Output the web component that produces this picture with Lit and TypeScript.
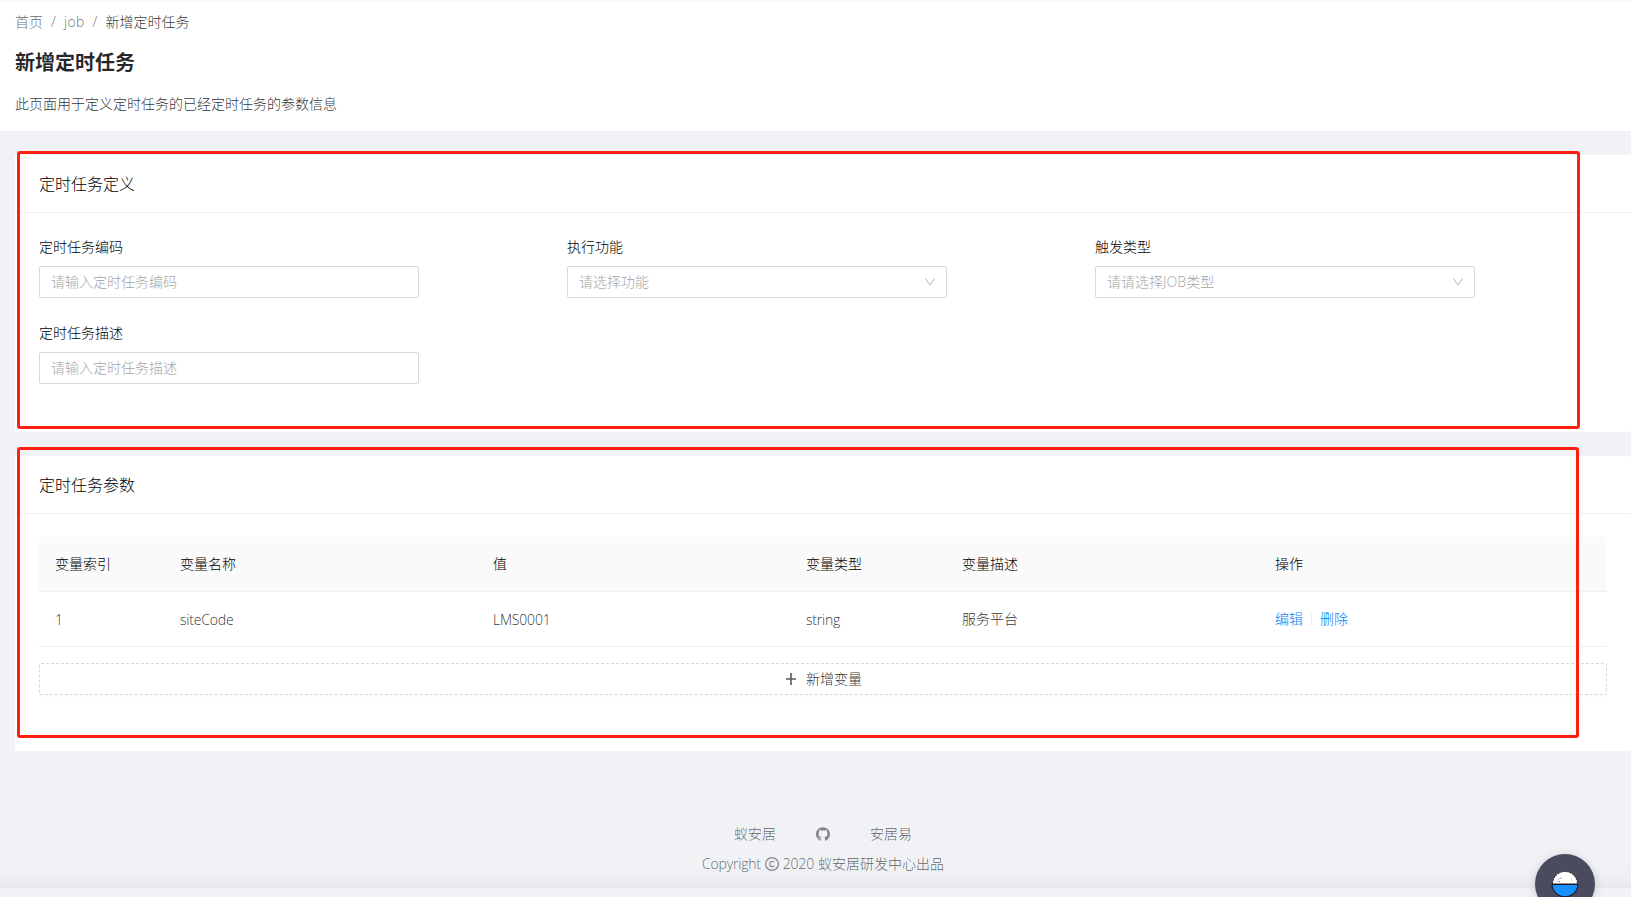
import { LitElement, html, css, svg } from "lit";
import { customElement, property } from "lit/decorators.js";

const chevron = svg`<path d="M884 256h-75c-5.1 0-9.900 2.500-12.900 6.600L512 654.200 227.900 262.600c-3-4.100-7.800-6.600-12.900-6.600h-75c-6.500 0-10.300 7.400-6.500 12.700l352.600 486.100c12.800 17.600 39 17.600 51.700 0l352.600-486.100c3.900-5.300.1-12.700-6.400-12.700z"/>`;
const github = svg`<path d="M511.600 76.300C264.300 76.200 64 276.400 64 523.500 64 718.900 189.300 885 363.800 946c23.500 5.900 19.900-10.800 19.900-22.200v-77.500c-135.700 15.900-141.200-73.900-150.300-88.900C215 726 171.500 718 184.500 703c30.900-15.900 62.400 4 98.900 57.900 26.400 39.100 77.900 32.500 104 26 5.700-23.500 17.900-44.500 34.700-60.800-140.600-25.200-199.200-111-199.200-213 0-49.500 16.300-95 48.300-131.700-20.400-60.500 1.900-112.300 4.900-120 58.100-5.200 118.500 41.600 123.200 45.300 33-8.900 70.700-13.600 112.900-13.600 42.400 0 80.200 4.900 113.500 13.900 11.300-8.600 67.300-48.800 121.300-43.900 2.900 7.700 24.700 58.300 5.500 118 32.400 36.800 48.900 82.700 48.900 132.300 0 102.200-59 188.100-200 212.900a127.500 127.500 0 0138.100 91v112.500c.8 9 0 17.900 15 17.900 177.100-59.700 304.600-227 304.600-424.100 0-247.200-200.400-447.300-447.500-447.300z"/>`;

@customElement("form-field")
export class FormField extends LitElement {
  @property() label = "";
  @property() hint = "";
  @property({ type: Boolean }) select = false;

  static styles = css`
    :host { display: block; width: 380px; height: 86px; box-sizing: border-box; }
    .label { color: #000; line-height: 22px; padding-bottom: 8px; }
    .box {
      display: flex; align-items: center; justify-content: space-between;
      height: 32px; box-sizing: border-box; padding: 0 10px 0 11px;
      border: 1px solid #d9d9d9; border-radius: 2px; background: #fff; color: #a6a6a6;
    }
    .box svg { width: 12px; height: 12px; fill: #bfbfbf; }
    .latin { letter-spacing: 0.1px; }
  `;

  render() {
    const parts = this.hint.split(/([A-Za-z]+)/);
    return html`
      <div class="label">${this.label}</div>
      <div class="box">
        <span>${parts.map((p, i) => (i % 2 ? html`<span class="latin">${p}</span>` : p))}</span>
        ${this.select ? html`<svg viewBox="64 64 896 896">${chevron}</svg>` : ""}
      </div>
    `;
  }
}

@customElement("app-root")
export class AppRoot extends LitElement {
  static styles = css`
    :host {
      display: block; position: relative; height: 897px; overflow: hidden; background: #f0f2f5;
      font: 300 14px/22px "Open Sans", "Noto Sans CJK SC", sans-serif;
      color: rgba(0, 0, 0, 0.84);
    }
    .latin { letter-spacing: -0.2px; }
    .row .latin { padding-top: 1px; }
    .head {
      height: 131px; box-sizing: border-box; padding: 11px 15px 0;
      background: linear-gradient(#f5f5f5, #fff 3px);
    }
    .crumbs { display: flex; gap: 8px; color: rgba(0, 0, 0, 0.6); }
    .crumbs .here { color: rgba(0, 0, 0, 0.84); }
    .crumbs .latin { letter-spacing: 0.25px; }
    h1 { margin: 14px 0 0; font-size: 20px; line-height: 32px; font-weight: 700; color: rgba(0, 0, 0, 0.85); }
    .desc { margin: 14px 0 0; }
    .main { display: flex; flex-direction: column; gap: 24px; padding: 24px 0 0 15px; }
    .card { background: #fff; border-radius: 2px; }
    .card h2 {
      margin: 0; height: 58px; box-sizing: border-box; padding: 0 24px;
      border-bottom: 1px solid #f0f0f0; font-size: 16px; line-height: 58px; font-weight: 300;
      color: #000;
    }
    .form { display: grid; grid-template-columns: repeat(3, 528px); padding: 23px 24px 24px; height: 172px; }
    .params { padding: 23px 24px 56px; }
    .row {
      display: grid; grid-template-columns: 125px 313px 313px 156px 313px 1fr;
      height: 55px; box-sizing: border-box; border-bottom: 1px solid #f0f0f0; align-items: center;
    }
    .row > div { padding-left: 16px; }
    .row.top { background: #fafafa; color: #000; border-radius: 2px 2px 0 0; }
    .ops { display: flex; align-items: center; color: #007dfa; }
    .bar { width: 1px; height: 13px; margin: 0 8px; background: #f0f0f0; }
    .add {
      display: flex; align-items: center; justify-content: center; gap: 8px;
      height: 32px; box-sizing: border-box; margin-top: 16px;
      border: 1px dashed #d9d9d9; border-radius: 2px; box-shadow: 0 2px 0 rgba(0, 0, 0, 0.015);
    }
    .add svg { width: 14px; height: 14px; }
    .foot { padding: 72px 0 0 15px; color: rgba(0, 0, 0, 0.6); }
    .links { display: flex; justify-content: center; align-items: center; gap: 40px; }
    .foot svg { width: 14px; height: 14px; fill: rgba(0, 0, 0, 0.45); display: block; }
    .copy { display: flex; justify-content: center; align-items: center; gap: 4px; margin-top: 8px; }
    .shade {
      position: absolute; left: 0; right: 0; top: 864px; height: 24px;
      background: linear-gradient(rgba(0, 0, 0, 0), rgba(0, 0, 0, 0.01) 50%, rgba(0, 0, 0, 0.035));
    }
    .mark { position: absolute; box-sizing: border-box; border: 3px solid #ff1e10; border-radius: 3px; }
    .mark.one { left: 17px; top: 151px; width: 1563px; height: 278px; }
    .mark.two { left: 17px; top: 447px; width: 1562px; height: 291px; }
    .bubble {
      position: absolute; left: 1535px; top: 854px; width: 60px; height: 60px; border-radius: 50%;
      background: #4b4b60; box-shadow: 0 2px 10px rgba(0, 0, 0, 0.18);
      display: flex; align-items: center; justify-content: center;
    }
  `;

  private heads = ["变量索引", "变量名称", "值", "变量类型", "变量描述", "操作"];

  render() {
    return html`
      <div class="head">
        <div class="crumbs">
          <span>首页</span><span class="latin">/</span><span class="latin">job</span><span class="latin">/</span>
          <span class="here">新增定时任务</span>
        </div>
        <h1>新增定时任务</h1>
        <div class="desc">此页面用于定义定时任务的已经定时任务的参数信息</div>
      </div>

      <div class="main">
        <section class="card">
          <h2>定时任务定义</h2>
          <div class="form">
            <form-field label="定时任务编码" hint="请输入定时任务编码"></form-field>
            <form-field label="执行功能" hint="请选择功能" select></form-field>
            <form-field label="触发类型" hint="请请选择JOB类型" select></form-field>
            <form-field label="定时任务描述" hint="请输入定时任务描述"></form-field>
          </div>
        </section>

        <section class="card">
          <h2>定时任务参数</h2>
          <div class="params">
            <div class="row top">${this.heads.map((h) => html`<div>${h}</div>`)}</div>
            <div class="row">
              <div class="latin">1</div>
              <div class="latin">siteCode</div>
              <div class="latin">LMS0001</div>
              <div class="latin">string</div>
              <div>服务平台</div>
              <div class="ops"><span>编辑</span><i class="bar"></i><span>删除</span></div>
            </div>
            <div class="add">
              <svg viewBox="0 0 14 14"><path d="M7 1v12M2 7h10" stroke="#595959" stroke-width="1.600" fill="none"/></svg>
              <span>新增变量</span>
            </div>
          </div>
        </section>
      </div>

      <div class="foot">
        <div class="links">
          <span>蚁安居</span>
          <svg viewBox="64 64 896 896">${github}</svg>
          <span>安居易</span>
        </div>
        <div class="copy">
          <span class="latin">Copyright</span>
          <svg viewBox="0 0 14 14">
            <g fill="none" stroke="#848587">
              <circle cx="7" cy="7" r="6.400" stroke-width="1.200"/>
              <path d="M9 5.700C8.700 4.700 8 4.200 7 4.200 5.700 4.200 4.900 5.200 4.900 7s.8 2.800 2.100 2.800c1 0 1.700-.5 2-1.500" stroke-width="1.100"/>
            </g>
          </svg>
          <span class="latin">2020</span><span>蚁安居研发中心出品</span>
        </div>
      </div>

      <div class="shade"></div>
      <div class="mark one"></div>
      <div class="mark two"></div>
      <div class="bubble">
        <svg width="28" height="28" viewBox="0 0 28 28">
          <path d="M1.500 14a12.500 12.500 0 0 1 25 0z" fill="#fff" stroke="#222" stroke-width="1" stroke-dasharray="2 1"/>
          <path d="M1 14.300h26a13 12.500 0 0 1-26 0z" fill="#1890ff" stroke="#1c1c28" stroke-width="1.200"/>
          <path d="M7 9.500l1-1M9.500 8h1M8 11.500h1M20 10h.8M6 12l.6-.6" stroke="#444" stroke-width=".8"/>
        </svg>
      </div>
    `;
  }
}
